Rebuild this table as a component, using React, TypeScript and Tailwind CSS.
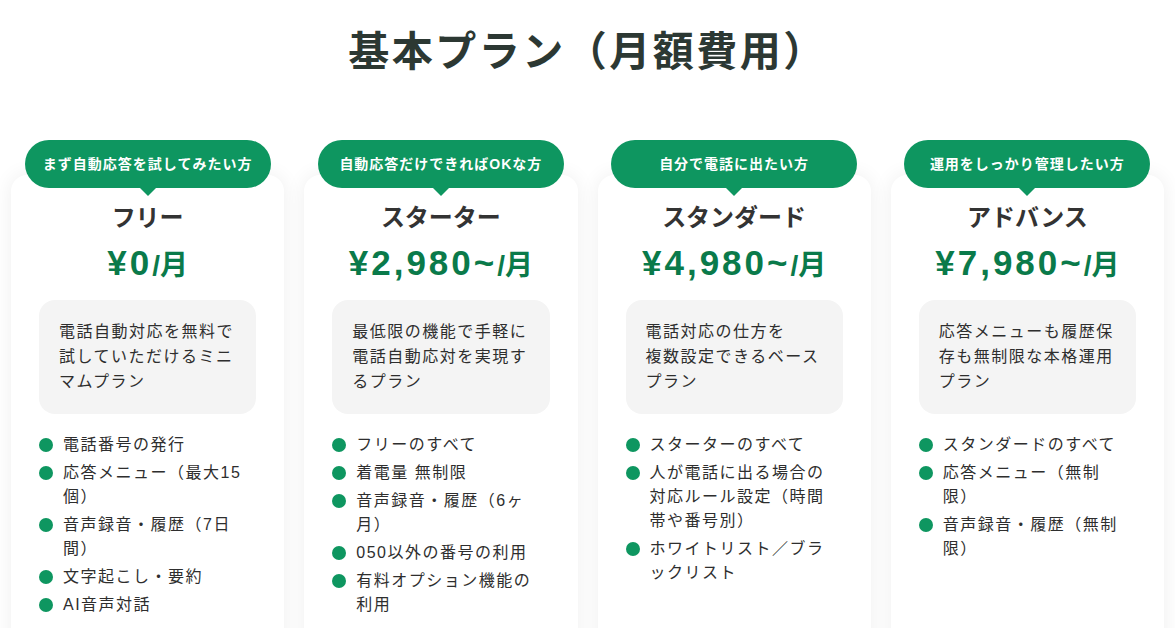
import React from 'react';

type Plan = {
  target: string;
  name: string;
  price: string;
  desc: React.ReactNode;
  features: string[];
};

const plans: Plan[] = [
  {
    target: 'まず自動応答を試してみたい方',
    name: 'フリー',
    price: '¥0',
    desc: '電話自動対応を無料で試していただけるミニマムプラン',
    features: ['電話番号の発行', '応答メニュー（最大15個）', '音声録音・履歴（7日間）', '文字起こし・要約', 'AI音声対話'],
  },
  {
    target: '自動応答だけできればOKな方',
    name: 'スターター',
    price: '¥2,980~',
    desc: '最低限の機能で手軽に電話自動応対を実現するプラン',
    features: ['フリーのすべて', '着電量 無制限', '音声録音・履歴（6ヶ月）', '050以外の番号の利用', '有料オプション機能の利用'],
  },
  {
    target: '自分で電話に出たい方',
    name: 'スタンダード',
    price: '¥4,980~',
    desc: (
      <>
        電話対応の仕方を
        <br />
        複数設定できるベースプラン
      </>
    ),
    features: ['スターターのすべて', '人が電話に出る場合の対応ルール設定（時間帯や番号別）', 'ホワイトリスト／ブラックリスト'],
  },
  {
    target: '運用をしっかり管理したい方',
    name: 'アドバンス',
    price: '¥7,980~',
    desc: '応答メニューも履歴保存も無制限な本格運用プラン',
    features: ['スタンダードのすべて', '応答メニュー（無制限）', '音声録音・履歴（無制限）'],
  },
];

function PlanCard({ plan }: { plan: Plan }) {
  return (
    <div className="flex flex-col items-center">
      <div className="relative z-10 flex h-12 w-[246px] items-center justify-center rounded-full bg-[#0e9660]">
        <span className="text-[14px] font-bold tracking-[1px] text-white">{plan.target}</span>
        <span className="absolute left-1/2 top-full -ml-2 h-0 w-0 border-x-8 border-t-8 border-x-transparent border-t-[#0e9660]" />
      </div>
      <div className="-mt-[13px] w-full flex-1 rounded-t-2xl bg-white px-7 pb-12 pt-[27px] shadow-[0_0_20px_rgba(0,0,0,0.07)]">
        <h3 className="text-center text-[24px] font-bold leading-8 text-[#333]">{plan.name}</h3>
        <div className="mt-[7px] flex items-baseline justify-center leading-[44px] text-[#0a7a4a]">
          <span className="text-[35px] font-bold tracking-[3px]">{plan.price}</span>
          <span className="text-[28px] font-bold">/月</span>
        </div>
        <div className="mt-3 rounded-2xl bg-[#f4f4f4] px-5 pb-5 pt-[19px] text-[16px] leading-[25px] tracking-[1.5px] text-[#2e2e2e]">
          {plan.desc}
        </div>
        <ul className="mt-[19px] flex flex-col gap-1 pr-2">
          {plan.features.map((f) => (
            <li key={f} className="flex gap-[10px] text-[16px] leading-6 tracking-[1.5px] text-[#2e2e2e]">
              <span className="mt-[5px] h-[14px] w-[14px] shrink-0 rounded-full bg-[#0e9660]" />
              <span>{f}</span>
            </li>
          ))}
        </ul>
      </div>
    </div>
  );
}

export default function App() {
  return (
    <div className="min-h-screen overflow-hidden bg-white font-['Liberation_Sans','Noto_Sans_CJK_JP',sans-serif] [text-spacing-trim:space-all]">
      <h1 className="pt-6 text-center text-[41px] font-bold leading-[56px] tracking-[2.5px] text-[#2c3833]">
        基本プラン（月額費用）
      </h1>
      <div className="mt-[60px] grid grid-cols-4 gap-5 px-[11px]">
        {plans.map((p) => (
          <PlanCard key={p.name} plan={p} />
        ))}
      </div>
    </div>
  );
}
